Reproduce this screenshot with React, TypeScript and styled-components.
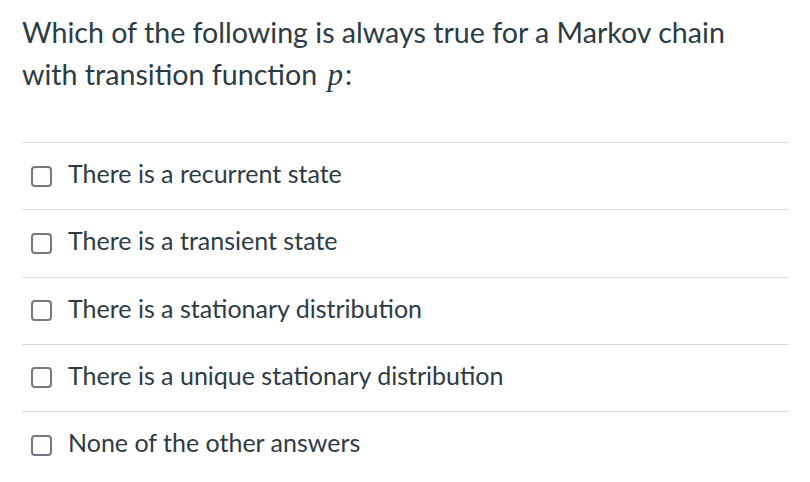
import React, { FC } from "react";
import styled, { createGlobalStyle } from "styled-components";

const GlobalStyle = createGlobalStyle`
  html, body {
    margin: 0;
    padding: 0;
    background: #ffffff;
  }
  body {
    font-family: Lato, "Noto Sans", sans-serif;
    color: #2d3b45;
  }
`;

const QuestionContainer = styled.div`
  width: 810px;
  height: 482px;
  padding: 12px 21px 0 22px;
  box-sizing: border-box;
  overflow: hidden;
`;

const QuestionText = styled.p`
  margin: 0;
  font-size: 28.6px;
  line-height: 41.5px;
  color: #2d3b45;
`;

const MathVar = styled.span`
  font-family: "Liberation Serif", "DejaVu Serif", serif;
  font-style: italic;
  font-size: 31px;
  margin: 0 2px 0 3px;
`;

const AnswerList = styled.div`
  display: flex;
  flex-direction: column;
  margin-top: 47px;
`;

const AnswerRow = styled.label`
  display: flex;
  align-items: center;
  height: 66.25px;
  padding-left: 9px;
  border-top: 1px solid #dadde0;
  cursor: pointer;
`;

const CheckBox = styled.span`
  flex: none;
  width: 17px;
  height: 17px;
  border: 2px solid #73797f;
  border-radius: 4px;
  background: #ffffff;
  margin-right: 16px;
`;

const AnswerText = styled.span`
  font-size: 25px;
  padding-bottom: 6px;
  color: #2d3b45;
`;

const answers = [
  "There is a recurrent state",
  "There is a transient state",
  "There is a stationary distribution",
  "There is a unique stationary distribution",
  "None of the other answers",
];

const App: FC = () => (
  <>
    <GlobalStyle />
    <QuestionContainer>
      <QuestionText>
        Which of the following is always true for a Markov chain
        <br />
        with transition function <MathVar>p</MathVar>:
      </QuestionText>
      <AnswerList>
        {answers.map((answer) => (
          <AnswerRow key={answer}>
            <CheckBox />
            <AnswerText>{answer}</AnswerText>
          </AnswerRow>
        ))}
      </AnswerList>
    </QuestionContainer>
  </>
);

export default App;
